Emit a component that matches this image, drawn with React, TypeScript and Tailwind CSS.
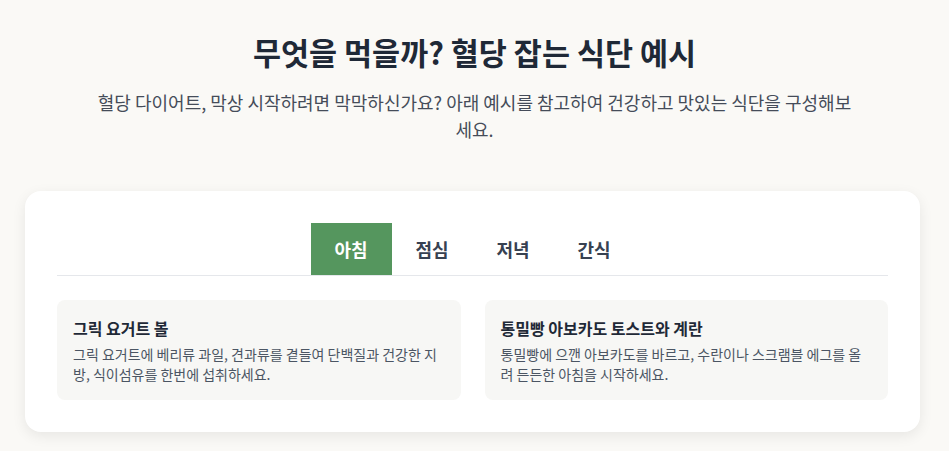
import { useState } from "react";

const tabs = ["아침", "점심", "저녁", "간식"] as const;
type Tab = (typeof tabs)[number];

interface Meal {
  title: string;
  desc: string;
}

const meals: Record<Tab, Meal[]> = {
  아침: [
    {
      title: "그릭 요거트 볼",
      desc: "그릭 요거트에 베리류 과일, 견과류를 곁들여 단백질과 건강한 지방, 식이섬유를 한번에 섭취하세요.",
    },
    {
      title: "통밀빵 아보카도 토스트와 계란",
      desc: "통밀빵에 으깬 아보카도를 바르고, 수란이나 스크램블 에그를 올려 든든한 아침을 시작하세요.",
    },
  ],
  점심: [],
  저녁: [],
  간식: [],
};

const font = { fontFamily: '"Noto Sans CJK KR", "Noto Sans", sans-serif' };

export default function App() {
  const [active, setActive] = useState<Tab>("아침");

  return (
    <div className="min-h-[451px] bg-[#faf9f6] px-[25px] pt-[34px] pb-10" style={font}>
      {/* header */}
      <div className="flex flex-col items-center text-center">
        <h1 className="text-[30.5px] leading-9 font-bold text-[#1f2937]">무엇을 먹을까? 혈당 잡는 식단 예시</h1>
        <p className="mt-[19px] max-w-3xl text-lg leading-[27px] text-[#454c59]">
          혈당 다이어트, 막상 시작하려면 막막하신가요? 아래 예시를 참고하여 건강하고 맛있는 식단을 구성해보세요.
        </p>
      </div>

      {/* meal card */}
      <div className="mt-[48px] max-w-[895px] rounded-2xl bg-white p-8 shadow-[0_4px_14px_rgba(0,0,0,0.08)]">
        <div className="flex justify-center border-b border-[#e5e7eb]">
          {tabs.map((t) => (
            <button
              key={t}
              onClick={() => setActive(t)}
              className={
                t === active
                  ? "w-[81px] py-3 text-lg leading-7 font-bold text-white bg-[#55965e]"
                  : "w-[81px] py-3 text-lg leading-7 font-bold text-[#374151]"
              }
            >
              {t}
            </button>
          ))}
        </div>

        <div className="mt-6 grid grid-cols-2 gap-6">
          {meals[active].map((m) => (
            <div key={m.title} className="rounded-lg bg-[#f7f7f5] p-4">
              <h3 className="mb-1 text-base leading-6 font-bold text-[#1f2937]">{m.title}</h3>
              <p className="text-sm leading-5 text-[#4b5563]">{m.desc}</p>
            </div>
          ))}
        </div>
      </div>
    </div>
  );
}
